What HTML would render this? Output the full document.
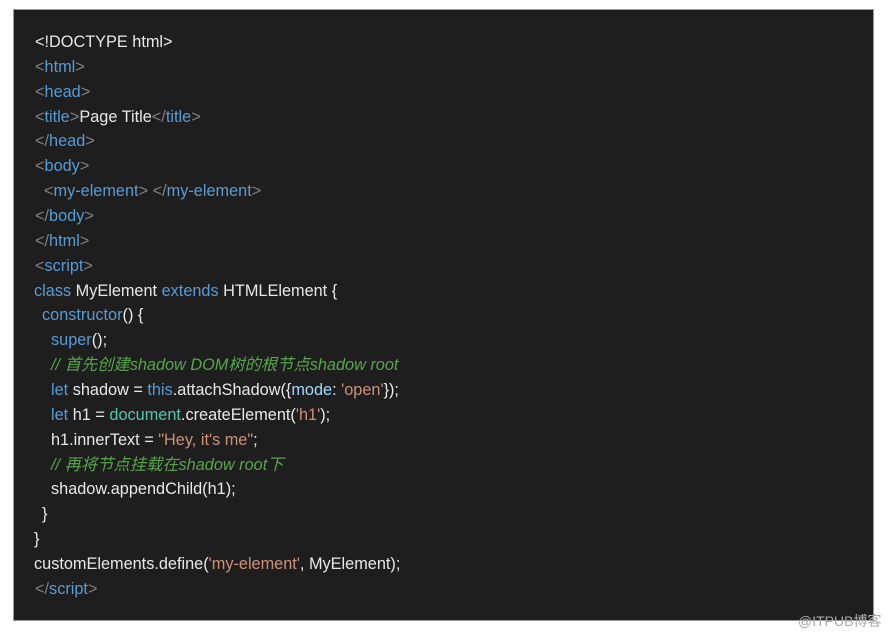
<!DOCTYPE html>
<html><head><meta charset="utf-8"><style>
html,body{margin:0;padding:0;background:#fff;width:889px;height:635px;overflow:hidden}
.box{position:absolute;left:13px;top:9px;width:861px;height:612px;background:#1e1e1e;border:1px solid #9a9a9a;box-sizing:border-box}
.code{position:absolute;left:35px;top:30px;font-family:"Liberation Sans","Noto Sans CJK SC",sans-serif;font-size:16.3px;line-height:24.86px;color:#e8e8e8;white-space:normal}
.code div{height:24.86px;white-space:pre}
.g{color:#808080}.b{color:#569cd6}.c{color:#57a64a;font-style:italic}.s{color:#ce9178}.t{color:#4ec9b0}.l{color:#9cdcfe}
.wm{position:absolute;left:798px;top:611px;font-family:"Liberation Sans","Noto Sans CJK SC",sans-serif;font-size:14px;color:#aaa}
</style></head><body>
<div class="box"></div>
<div class="code">
<div>&lt;!DOCTYPE html&gt;</div>
<div><span class="g">&lt;</span><span class="b">html</span><span class="g">&gt;</span></div>
<div><span class="g">&lt;</span><span class="b">head</span><span class="g">&gt;</span></div>
<div><span class="g">&lt;</span><span class="b">title</span><span class="g">&gt;</span>Page Title<span class="g">&lt;/</span><span class="b">title</span><span class="g">&gt;</span></div>
<div><span class="g">&lt;/</span><span class="b">head</span><span class="g">&gt;</span></div>
<div><span class="g">&lt;</span><span class="b">body</span><span class="g">&gt;</span></div>
<div style="padding-left:9px"><span class="g">&lt;</span><span class="b">my-element</span><span class="g">&gt;</span> <span class="g">&lt;/</span><span class="b">my-element</span><span class="g">&gt;</span></div>
<div><span class="g">&lt;/</span><span class="b">body</span><span class="g">&gt;</span></div>
<div><span class="g">&lt;/</span><span class="b">html</span><span class="g">&gt;</span></div>
<div><span class="g">&lt;</span><span class="b">script</span><span class="g">&gt;</span></div>
<div style="margin-left:-1px"><span class="b">class</span> MyElement <span class="b">extends</span> HTMLElement {</div>
<div style="padding-left:7px"><span class="b">constructor</span>() {</div>
<div style="padding-left:16px"><span class="b">super</span>();</div>
<div style="padding-left:16px"><span class="c">// 首先创建shadow DOM树的根节点shadow root</span></div>
<div style="padding-left:16px"><span class="b">let</span> shadow = <span class="b">this</span>.attachShadow({<span class="l">mode</span>: <span class="s">'open'</span>});</div>
<div style="padding-left:16px"><span class="b">let</span> h1 = <span class="t">document</span>.createElement(<span class="s">'h1'</span>);</div>
<div style="padding-left:16px">h1.innerText = <span class="s">"Hey, it's me"</span>;</div>
<div style="padding-left:16px"><span class="c">// 再将节点挂载在shadow root下</span></div>
<div style="padding-left:16px">shadow.appendChild(h1);</div>
<div style="padding-left:7px">}</div>
<div style="margin-left:-1px">}</div>
<div style="margin-left:-1px">customElements.define(<span class="s">'my-element'</span>, MyElement);</div>
<div><span class="g">&lt;/</span><span class="b">script</span><span class="g">&gt;</span></div>
</div>
<div class="wm">@ITPUB博客</div>
</body></html>
